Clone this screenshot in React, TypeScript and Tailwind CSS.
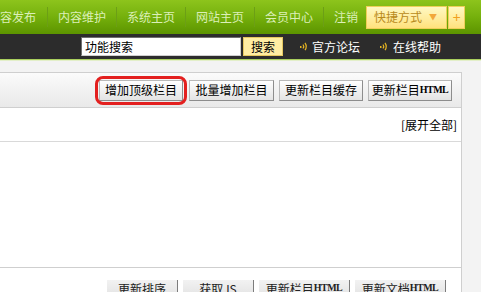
const font = { fontFamily: '"Noto Sans CJK SC", "Noto Sans", sans-serif' };

const navItems = ["内容发布", "内容维护", "系统主页", "网站主页", "会员中心", "注销"];

function Signal() {
  return (
    <svg width="7" height="9" viewBox="0 0 7 9" className="shrink-0">
      <rect x="0" y="4" width="1.5" height="2" fill="#e6b422" />
      <path d="M3 2.5 Q4.5 4.5 3 6.5" stroke="#e6b422" strokeWidth="1.2" fill="none" />
      <path d="M5 0.8 Q7.5 4.5 5 8.2" stroke="#e6b422" strokeWidth="1.2" fill="none" />
    </svg>
  );
}

function ToolButton({ label, html, className = "" }: { label: string; html?: boolean; className?: string }) {
  return (
    <button
      className={`h-[21px] flex items-center justify-center border border-[#b9b9b9] border-r-[#8d8d8d] border-b-[#8d8d8d] bg-gradient-to-b from-[#ffffff] to-[#e3e3e3] text-[12px] text-black leading-none ${className}`}
    >
      {label}
      {html && <span className="text-[10px] font-bold tracking-[-0.5px]" style={{ fontFamily: '"Liberation Serif", serif' }}>HTML</span>}
    </button>
  );
}

function BottomButton({ label, html, className = "" }: { label: string; html?: boolean; className?: string }) {
  return (
    <button
      className={`h-[22px] flex items-start justify-center pt-[3px] border-r border-[#7c7c7c] bg-gradient-to-b from-[#f2f2f2] to-[#dedede] text-[12px] text-[#222] leading-none ${className}`}
    >
      {label}
      {html && <span className="text-[10px] font-bold tracking-[-0.5px]" style={{ fontFamily: '"Liberation Serif", serif' }}>HTML</span>}
    </button>
  );
}

export default function App() {
  return (
    <div className="w-[481px] h-[292px] overflow-hidden bg-[#f3f3f3]" style={font}>
      {/* top nav */}
      <div className="h-[34px] flex items-center bg-gradient-to-b from-[#8dc41c] via-[#75b00c] to-[#5c9400] overflow-hidden">
        <div className="flex items-center -ml-[12px]">
          {navItems.map((item, i) => (
            <div key={item} className="flex items-center">
              {i > 0 && <span className="w-px h-[20px] bg-[#6c9f16]" />}
              <span
                className={`${i === 0 ? "pl-0 pr-[11px]" : i === navItems.length - 1 ? "pl-[10px] pr-[8px]" : "pl-[10px] pr-[10px]"} text-[12px] text-[#dcefb8] leading-none`}
              >
                {item}
              </span>
            </div>
          ))}
        </div>
        <div className="flex items-center h-[23px] w-[81px] pl-[7px] border border-[#f0cf5a] bg-gradient-to-b from-[#fff8c2] to-[#ffe27c] text-[12px] text-[#b98a1c] leading-none">
          快捷方式
          <span className="ml-[7px] text-[8px] text-[#f2a73a]">▼</span>
        </div>
        <div className="ml-px flex items-center justify-center h-[23px] w-[17px] border border-[#f0cf5a] bg-gradient-to-b from-[#fff8c2] to-[#ffe27c] text-[14px] text-[#f0a020] leading-none">
          +
        </div>
      </div>

      {/* dark bar */}
      <div className="h-[25px] flex items-center bg-[#2c2c2c]">
        <div className="ml-[81px] h-[19px] w-[160px] flex items-center pl-[3px] bg-white border border-[#6f6f6f] border-b-[#cfcfcf] border-r-[#cfcfcf] text-[12px] text-black leading-none">
          功能搜索
        </div>
        <div className="ml-[2px] h-[19px] w-[40px] flex items-center justify-center bg-[#ffeda2] border border-[#e6c860] text-[12px] text-black leading-none">
          搜索
        </div>
        <div className="ml-[17px] flex items-center gap-[5px] text-[12px] text-white leading-none">
          <Signal />
          官方论坛
        </div>
        <div className="ml-[20px] flex items-center gap-[6px] text-[12px] text-white leading-none">
          <Signal />
          在线帮助
        </div>
      </div>
      <div className="h-px bg-[#a9cf5e]" />
      <div className="h-px bg-[#e3efc9]" />

      {/* content */}
      <div className="flex pt-[11px]">
        <div className="w-[462px] border-t border-r border-[#cfcfcf] bg-white">
          <div className="h-[35px] flex items-center justify-end gap-[5px] pr-[9px] border-b border-[#cfcfcf] bg-gradient-to-b from-[#fbfbfb] to-[#e9e9e9]">
            <span className="rounded-[4px] outline-[3px] outline-solid outline-[#e3201f] outline-offset-[1px]">
              <ToolButton label="增加顶级栏目" className="w-[84px]" />
            </span>
            <ToolButton label="批量增加栏目" className="w-[85px] ml-px" />
            <ToolButton label="更新栏目缓存" className="w-[84px]" />
            <ToolButton label="更新栏目" html className="w-[84px]" />
          </div>
          <div className="h-[34px] flex items-center justify-end pr-[4px] border-b border-[#d9d9d9] text-[12px] text-black leading-none">
            [展开全部]
          </div>
          <div className="h-[126px] border-b border-[#cfcfcf]" />
          <div className="flex justify-end gap-[5px] pr-[15px] pt-[12px]">
            <BottomButton label="更新排序" className="w-[71px]" />
            <BottomButton label="获取JS" className="w-[71px]" />
            <BottomButton label="更新栏目" html className="w-[91px]" />
            <BottomButton label="更新文档" html className="w-[91px]" />
          </div>
        </div>
        <div className="flex-1" />
      </div>
    </div>
  );
}
